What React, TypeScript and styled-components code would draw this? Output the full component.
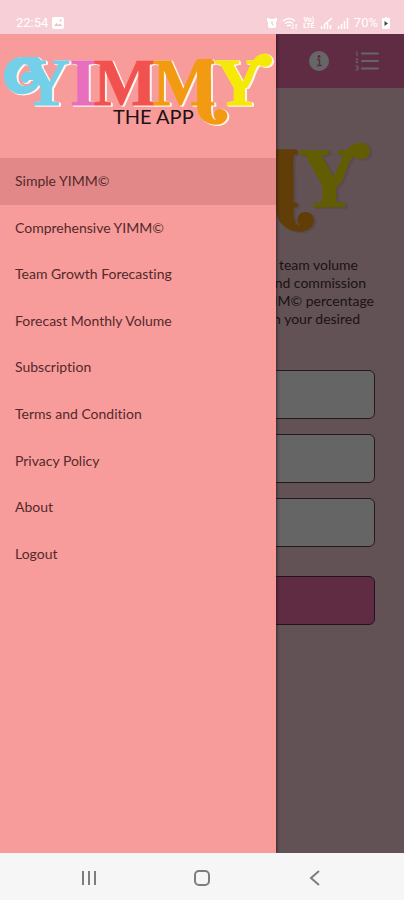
import React from "react";
import styled, { createGlobalStyle } from "styled-components";

const GlobalStyle = createGlobalStyle`
  *, *::before, *::after { box-sizing: border-box; }
  body {
    margin: 0;
    font-family: Lato, "Liberation Sans", sans-serif;
    font-variant-ligatures: none;
  }
  button, input { font: inherit; }
`;

const Screen = styled.div`
  min-height: 100vh;
  display: flex;
  flex-direction: column;
  background: #f7cfd7;
`;

const StatusBar = styled.header`
  height: 34px;
  padding: 12px 14px 0 16px;
  display: flex;
  align-items: center;
  justify-content: space-between;
  color: #fff;
  font: 13px/20px Roboto, sans-serif;
`;

const StatusGroup = styled.div`
  display: flex;
  align-items: center;
  gap: 4px;
`;

const NetworkLabel = styled.span`
  width: 14px;
  font-size: 7px;
  line-height: 6px;
  font-weight: 700;
  text-align: center;
`;

const Stage = styled.div`
  position: relative;
  flex: 1;
  display: flex;
  flex-direction: column;
  overflow: hidden;
  background: #f5cdd5;
`;

const AppBar = styled.div`
  height: 54px;
  padding: 0 24px;
  display: flex;
  align-items: center;
  justify-content: flex-end;
  gap: 26px;
  background: #ee6ea8;
`;

const IconButton = styled.button`
  padding: 0;
  border: 0;
  background: none;
  display: flex;
  color: inherit;
`;

const BarIconButton = styled(IconButton)`
  color: #fff;
`;

const Page = styled.main`
  padding: 50px 29px 0;
  display: flex;
  flex-direction: column;
`;

const Intro = styled.p`
  margin: 18px 0 0;
  font-size: 14px;
  line-height: 18px;
  text-align: right;
  color: #4a3038;
`;

const IntroLine = styled.span<{ $inset: number }>`
  display: block;
  padding-right: ${(p) => p.$inset}px;
`;

const Form = styled.form`
  margin-top: 42px;
  display: flex;
  flex-direction: column;
  gap: 15px;
`;

const Field = styled.input`
  width: 100%;
  height: 49px;
  padding: 0 12px;
  border: 1px solid #55444a;
  border-radius: 6px;
  background: #fdfdfd;
`;

const SubmitButton = styled.button`
  height: 49px;
  margin-top: 14px;
  border: 1px solid #55343f;
  border-radius: 6px;
  background: #ee6ea8;
`;

const Scrim = styled.div`
  position: absolute;
  inset: 0;
  background: rgba(0, 0, 0, 0.6);
`;

const Drawer = styled.aside`
  position: absolute;
  inset: 0 auto 0 0;
  width: 276px;
  max-width: 85%;
  background: #f79c9a;
  box-shadow: 1px 0 3px rgba(30, 10, 20, 0.6);
`;

const DrawerHeader = styled.div`
  height: 124px;
  padding-top: 16px;
`;

const Menu = styled.nav`
  height: 419px;
  display: grid;
  grid-auto-rows: 1fr;
`;

const MenuLink = styled.a<{ $active: boolean }>`
  padding-left: 15px;
  display: flex;
  align-items: center;
  font-size: 14px;
  line-height: 20px;
  color: #54292b;
  text-decoration: none;
  background: ${(p) => (p.$active ? "#e28888" : "transparent")};
`;

const LogoArt = styled.svg`
  display: block;
  width: 100%;
  height: auto;
`;

const LogoLetters = styled.g<{ $edge: string }>`
  font: 700 67px "Liberation Serif", serif;
  filter: drop-shadow(1px 1px 0 ${(p) => p.$edge}) drop-shadow(1px 0 0 ${(p) => p.$edge});
`;

const LogoCaption = styled.text`
  font: 20px Lato, sans-serif;
  fill: #1d1214;
`;

const SystemBar = styled.footer`
  height: 47px;
  padding: 2px 33px 0;
  display: grid;
  grid-template-columns: repeat(3, 1fr);
  place-items: center;
  background: #f6f6f6;
  color: #7d7d7d;
`;

function Logo({ edge, caption = false }: { edge: string; caption?: boolean }) {
  return (
    <LogoArt viewBox="0 0 276 80" role="img" aria-label="YIMMY">
      <LogoLetters textAnchor="middle" $edge={edge}>
        <g fill="#74cfe9" stroke="#74cfe9">
          <text x="46" y="55">Y</text>
          <path
            stroke="none"
            fillRule="evenodd"
            d="M38 7H22C10 7 4 17 4 26C4 38 14 46 25 44C35 43 41 35 40 27C39 21 43 18 41 10ZM26 12C27 17 32 18 34 22C28 20 22 22 21 27C20 33 27 35 29 30L33 30C32 38 19 38 17 30C15 23 20 17 26 12Z"
          />
        </g>
        <text x="83" y="55" fill="#e86fbd" stroke="#e86fbd">I</text>
        <text x="125" y="55" fill="#f2524f" stroke="#f2524f">M</text>
      </LogoLetters>
      <LogoLetters textAnchor="middle" $edge={edge}>
        <g fill="#f29a12">
          <text x="184" y="55" stroke="#f29a12">M</text>
          <path d="M197 9H213C210 14 211 22 211 34V55C211 65 212 69 216 70C212 65 215 59 220 59C227 59 229 66 226 70C222 76 212 76 206 72C199 68 197 62 197 53Z" />
        </g>
      </LogoLetters>
      <LogoLetters textAnchor="middle" $edge={edge}>
        <g fill="#f6e907">
          <text x="239" y="55" stroke="#f6e907">Y</text>
          <path d="M239 38C246 29 249 10 259 5C265 2 272 5 272 10C272 16 266 19 259 15C254 18 253 31 247 38Z" />
        </g>
      </LogoLetters>
      {caption && <LogoCaption x="113" y="74">THE APP</LogoCaption>}
    </LogoArt>
  );
}

function PictureIcon() {
  return (
    <svg width="12" height="12" viewBox="0 0 12 12" aria-hidden="true">
      <rect width="12" height="12" rx="2" fill="#fff" />
      <path d="M2 9l2.500-3 2 2 1.500-1.500L10.500 9z" fill="#f3bcc8" />
      <circle cx="8.500" cy="3.500" r="1" fill="#f3bcc8" />
    </svg>
  );
}

function AlarmIcon() {
  return (
    <svg width="12" height="12" viewBox="0 0 12 12" aria-hidden="true">
      <path d="M1 1h2l1 1h4l1-1h2v3l-1 1v5l-1 1H3l-1-1V5L1 4z" fill="#fff" />
      <path d="M6 4v3l1.500 1" stroke="#f3bcc8" fill="none" />
    </svg>
  );
}

function WifiIcon() {
  return (
    <svg width="16" height="13" viewBox="0 0 16 13" fill="none" stroke="#fff" aria-hidden="true">
      <path d="M1 4q6-5 12 0M3 6.500q4-3 8 0M5 9q2-1.500 4 0" strokeWidth="1.500" />
      <path d="M11 7v5M9.500 10.500L11 12M14 12V7M14 7l1.500 1.500" />
    </svg>
  );
}

function SignalIcon({ slashed = false }: { slashed?: boolean }) {
  return (
    <svg width="13" height="12" viewBox="0 0 13 12" stroke="#fff" strokeWidth="1.500" aria-hidden="true">
      {slashed ? (
        <path d="M1.500 12V9M4.500 12V8M7.500 12V6M10.500 12V8M4 8l8-7" />
      ) : (
        <path d="M1.500 12V9M4.500 12V7M7.500 12V4M10.500 12V1" />
      )}
    </svg>
  );
}

function BatteryIcon() {
  return (
    <svg width="8" height="12" viewBox="0 0 8 12" aria-hidden="true">
      <path d="M2 1h1V0h2v1h2q1 0 1 1v9q0 1-1 1H1q-1 0-1-1V2q0-1 1-1z" fill="#fff" />
      <path d="M2.500 4L6 6.500 2.500 9z" fill="#4b4348" />
    </svg>
  );
}

function InfoIcon() {
  return (
    <svg width="20" height="20" viewBox="0 0 20 20" aria-hidden="true">
      <circle cx="10" cy="10" r="10" fill="currentColor" />
      <circle cx="10" cy="5.500" r="1.500" fill="#ee6ea8" />
      <path d="M8 8.500h2.500v6M8 14.500h5" stroke="#ee6ea8" strokeWidth="1.500" fill="none" />
    </svg>
  );
}

function NumberedListIcon() {
  return (
    <svg width="25" height="20" viewBox="0 0 25 20" fill="none" stroke="currentColor" aria-hidden="true">
      <path d="M7 2.500h16M7 10h16M7 17.500h16" strokeWidth="2" strokeLinecap="round" />
      <path d="M1 1h1v4M.5 8H3L1 11.500h2.500M.5 15H3v4H.5M1 17h2" />
    </svg>
  );
}

const introLines = [
  { text: "team volume", inset: 17 },
  { text: "and commission", inset: 9 },
  { text: "YIMM© percentage", inset: 1 },
  { text: "in your desired", inset: 15 },
];

const menuItems = [
  "Simple YIMM©",
  "Comprehensive YIMM©",
  "Team Growth Forecasting",
  "Forecast Monthly Volume",
  "Subscription",
  "Terms and Condition",
  "Privacy Policy",
  "About",
  "Logout",
];

export default function App() {
  return (
    <Screen>
      <GlobalStyle />
      <StatusBar>
        <StatusGroup>
          <span>22:54</span>
          <PictureIcon />
        </StatusGroup>
        <StatusGroup>
          <AlarmIcon />
          <WifiIcon />
          <NetworkLabel>Vo) LTE</NetworkLabel>
          <SignalIcon slashed />
          <SignalIcon />
          <span>70%</span>
          <BatteryIcon />
        </StatusGroup>
      </StatusBar>

      <Stage>
        <AppBar>
          <BarIconButton aria-label="Information"><InfoIcon /></BarIconButton>
          <BarIconButton aria-label="Menu"><NumberedListIcon /></BarIconButton>
        </AppBar>
        <Page>
          <Logo edge="#e4b8c0" />
          <Intro>
            {introLines.map((line) => (
              <IntroLine key={line.text} $inset={line.inset}>{line.text}</IntroLine>
            ))}
          </Intro>
          <Form>
            <Field aria-label="Team volume" />
            <Field aria-label="Commission" />
            <Field aria-label="Percentage" />
            <SubmitButton type="button" aria-label="Calculate" />
          </Form>
        </Page>
        <Scrim />
        <Drawer>
          <DrawerHeader><Logo edge="#fff4ee" caption /></DrawerHeader>
          <Menu>
            {menuItems.map((item, i) => (
              <MenuLink key={item} href="#" $active={i === 0}>{item}</MenuLink>
            ))}
          </Menu>
        </Drawer>
      </Stage>

      <SystemBar>
        <IconButton aria-label="Recent apps">
          <svg width="16" height="16" viewBox="0 0 16 16" stroke="currentColor" strokeWidth="2">
            <path d="M2 1v14M8 1v14M14 1v14" />
          </svg>
        </IconButton>
        <IconButton aria-label="Home">
          <svg width="18" height="18" viewBox="0 0 18 18" fill="none" stroke="currentColor" strokeWidth="2">
            <rect x="2" y="2" width="14" height="14" rx="4" />
          </svg>
        </IconButton>
        <IconButton aria-label="Back">
          <svg width="16" height="16" viewBox="0 0 16 16" fill="none" stroke="currentColor" strokeWidth="2">
            <path d="M12 1L4 8l8 7" />
          </svg>
        </IconButton>
      </SystemBar>
    </Screen>
  );
}
